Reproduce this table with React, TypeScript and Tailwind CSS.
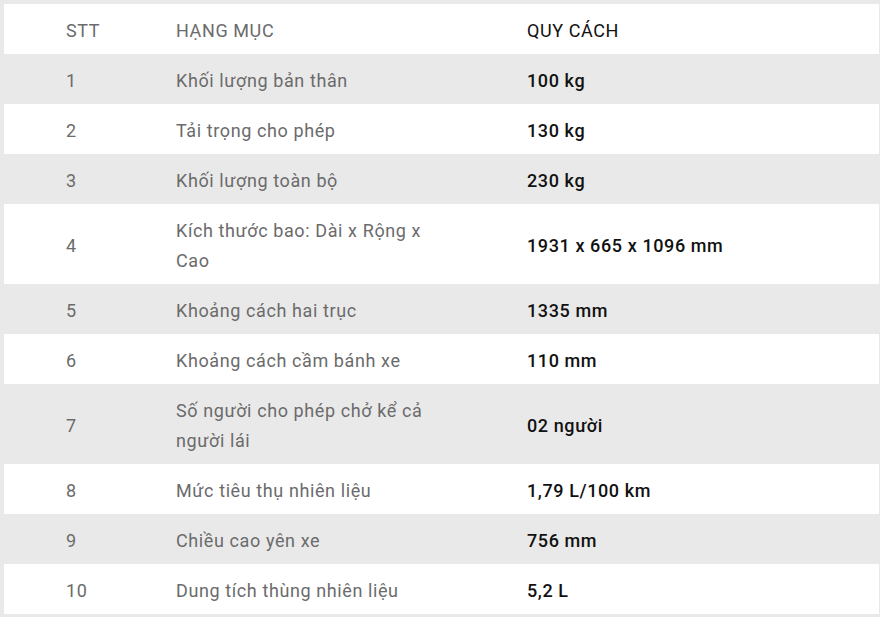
import React from 'react';

interface SpecRow {
  stt: string;
  name: string;
  value: string;
}

const rows: SpecRow[] = [
  { stt: '1', name: 'Khối lượng bản thân', value: '100 kg' },
  { stt: '2', name: 'Tải trọng cho phép', value: '130 kg' },
  { stt: '3', name: 'Khối lượng toàn bộ', value: '230 kg' },
  { stt: '4', name: 'Kích thước bao: Dài x Rộng x Cao', value: '1931 x 665 x 1096 mm' },
  { stt: '5', name: 'Khoảng cách hai trục', value: '1335 mm' },
  { stt: '6', name: 'Khoảng cách cầm bánh xe', value: '110 mm' },
  { stt: '7', name: 'Số người cho phép chở kể cả người lái', value: '02 người' },
  { stt: '8', name: 'Mức tiêu thụ nhiên liệu', value: '1,79 L/100 km' },
  { stt: '9', name: 'Chiều cao yên xe', value: '756 mm' },
  { stt: '10', name: 'Dung tích thùng nhiên liệu', value: '5,2 L' },
];

const Row: React.FC<{ row: SpecRow; striped: boolean; header?: boolean }> = ({ row, striped, header }) => (
  <div className={`flex items-center pt-[12px] pb-[8px] leading-[30px] ${striped ? 'bg-[#e9e9e9]' : 'bg-white'}`}>
    <div className="w-[172px] shrink-0 pl-[62px] text-[#6b6b6b]">{row.stt}</div>
    <div className="w-[351px] shrink-0 pr-[78px] text-[#6b6b6b]">{row.name}</div>
    <div className={`flex-1 text-[#111] ${header ? 'font-normal' : 'font-medium'}`}>{row.value}</div>
  </div>
);

export default function App() {
  return (
    <div
      className="min-h-[617px] bg-[#e9e9e9] pt-[4px] pl-[4px] pr-[1px] pb-[4px] text-[18px] tracking-[0.6px]"
      style={{ fontFamily: 'Roboto, "Noto Sans", sans-serif' }}
    >
      <div className="flex flex-col">
        <Row row={{ stt: 'STT', name: 'HẠNG MỤC', value: 'QUY CÁCH' }} striped={false} header />
        {rows.map((r, i) => (
          <Row key={r.stt} row={r} striped={i % 2 === 0} />
        ))}
      </div>
    </div>
  );
}
